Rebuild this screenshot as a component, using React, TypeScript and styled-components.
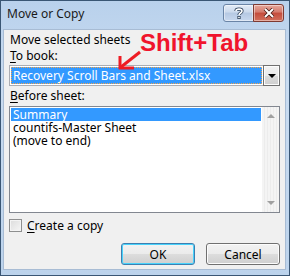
import React from 'react';
import styled, { createGlobalStyle } from 'styled-components';

const GlobalStyle = createGlobalStyle`
  html, body {
    margin: 0;
    padding: 0;
    background: #ffffff;
  }
  body {
    font-family: 'Noto Sans', 'Liberation Sans', sans-serif;
    font-size: 12px;
    color: #000;
  }
`;

const Window = styled.div`
  position: relative;
  width: 290px;
  height: 276px;
  box-sizing: border-box;
  border: 1px solid #3a5674;
  background: linear-gradient(180deg, #b9d1ec 0%, #c9dcf1 30%, #bcd3ec 100%);
  display: flex;
  flex-direction: column;
  overflow: hidden;
`;

const TitleBar = styled.div`
  height: 28px;
  display: flex;
  align-items: flex-start;
  padding-left: 6px;
  padding-right: 5px;
`;

const Title = styled.div`
  flex: 1;
  font-size: 12px;
  line-height: 14px;
  padding-top: 6px;
  color: #1a1a1a;
`;

const CaptionButtons = styled.div`
  display: flex;
  margin-top: 3px;
`;

const CaptionButton = styled.div<{ $close?: boolean }>`
  width: 31px;
  height: 18px;
  box-sizing: border-box;
  display: flex;
  align-items: center;
  justify-content: center;
  border: 1px solid ${(p) => (p.$close ? '#7e3a32' : '#6a84a6')};
  border-radius: ${(p) => (p.$close ? '0 3px 3px 0' : '3px 0 0 3px')};
  margin-left: ${(p) => (p.$close ? '-1px' : '0')};
  background: ${(p) =>
    p.$close
      ? 'linear-gradient(180deg, #e7a89b 0%, #d47a6d 45%, #c44c3c 50%, #d2705d 100%)'
      : 'linear-gradient(180deg, #e4ecf7 0%, #cbd9ec 45%, #b5c8e2 50%, #c8d8ee 100%)'};
  box-shadow: inset 0 0 0 1px rgba(255, 255, 255, 0.45);
`;

const Client = styled.div`
  margin: 0 3px 5px 2px;
  flex: 1;
  background: #f0f0f0;
  border: 1px solid #a8bcd4;
  display: flex;
  flex-direction: column;
  padding: 2px 5px 4px 5px;
`;

const Label = styled.div<{ $gap?: number }>`
  height: 15px;
  line-height: 15px;
  white-space: nowrap;
  margin-left: 1px;
  margin-top: ${(p) => p.$gap || 0}px;
`;

const Key = styled.span`
  text-decoration: underline;
  text-underline-offset: 2px;
`;

const Combo = styled.div`
  margin-top: 2px;
  height: 21px;
  box-sizing: border-box;
  border: 1px solid #abadb3;
  background: #fff;
  display: flex;
`;

const ComboValue = styled.div`
  flex: 1;
  margin: 1px;
  background: #3399ff;
  color: #fff;
  outline: 1px dotted #f6a44a;
  outline-offset: -1px;
  line-height: 17px;
  padding-left: 2px;
  white-space: nowrap;
  overflow: hidden;
`;

const ComboButton = styled.div`
  width: 17px;
  box-sizing: border-box;
  border: 1px solid #707070;
  margin: -1px -1px -1px 0;
  background: linear-gradient(180deg, #f2f2f2 0%, #ebebeb 50%, #dddddd 51%, #cfcfcf 100%);
  box-shadow: inset 0 0 0 1px #fcfcfc;
  display: flex;
  align-items: center;
  justify-content: center;
`;

const DownTri = styled.div<{ $color?: string }>`
  width: 0;
  height: 0;
  border-left: 4px solid transparent;
  border-right: 4px solid transparent;
  border-top: 4px solid ${(p) => p.$color || '#000'};
`;

const UpTri = styled.div<{ $color?: string }>`
  width: 0;
  height: 0;
  border-left: 4px solid transparent;
  border-right: 4px solid transparent;
  border-bottom: 4px solid ${(p) => p.$color || '#000'};
`;

const ListBox = styled.div`
  margin-top: 3px;
  height: 107px;
  box-sizing: border-box;
  border: 1px solid #828790;
  background: #fff;
  display: flex;
`;

const Items = styled.div`
  flex: 1;
  padding: 1px;
`;

const Item = styled.div<{ $selected?: boolean }>`
  height: 13px;
  line-height: 13px;
  padding-left: 2px;
  white-space: nowrap;
  background: ${(p) => (p.$selected ? '#3399ff' : 'transparent')};
  color: ${(p) => (p.$selected ? '#fff' : '#000')};
`;

const ScrollBar = styled.div`
  width: 17px;
  background: repeating-linear-gradient(90deg, #f4f4f4 0px, #f4f4f4 2px, #ececec 2px, #ececec 3px);
  display: flex;
  flex-direction: column;
  align-items: center;
  justify-content: space-between;
  padding: 7px 0 7px;
`;

const CheckRow = styled.label`
  margin-top: 6px;
  display: flex;
  align-items: center;
  height: 13px;
  gap: 5px;
`;

const Box = styled.div`
  width: 13px;
  height: 13px;
  box-sizing: border-box;
  border: 1px solid #8e8f8f;
  background: linear-gradient(135deg, #dcdcdc 0%, #f6f6f6 100%);
  box-shadow: inset 0 0 0 1px #f4f4f4;
`;

const ButtonRow = styled.div`
  margin-top: auto;
  display: flex;
  justify-content: flex-end;
  gap: 11px;
`;

const Button = styled.div<{ $default?: boolean }>`
  width: 74px;
  height: 22px;
  box-sizing: border-box;
  border: 1px solid ${(p) => (p.$default ? '#3c7fb1' : '#707070')};
  border-radius: 3px;
  background: linear-gradient(180deg, #f2f2f2 0%, #ebebeb 50%, #dddddd 51%, #cfcfcf 100%);
  box-shadow: inset 0 0 0 1px ${(p) => (p.$default ? '#48d2fb' : '#fcfcfc')};
  display: flex;
  align-items: center;
  justify-content: center;
`;

const Annotation = styled.div`
  position: absolute;
  left: 139px;
  top: 27px;
  font-family: 'Liberation Sans', 'Noto Sans', sans-serif;
  font-weight: bold;
  font-size: 24px;
  color: #f0142d;
  line-height: 30px;
  white-space: nowrap;
`;

const Arrow = styled.svg`
  position: absolute;
  left: 114px;
  top: 49px;
`;

export default function App() {
  return (
    <>
      <GlobalStyle />
      <Window>
        <TitleBar>
          <Title>Move or Copy</Title>
          <CaptionButtons>
            <CaptionButton>
              <svg width="10" height="12" viewBox="0 0 10 12">
                <path
                  d="M2 4 C2 1.5 8 1.5 8 4 C8 6 5 6 5 8"
                  fill="none"
                  stroke="#2c3f57"
                  strokeWidth="3.2"
                />
                <path
                  d="M2 4 C2 1.5 8 1.5 8 4 C8 6 5 6 5 8"
                  fill="none"
                  stroke="#fff"
                  strokeWidth="1.6"
                />
                <rect x="3.4" y="9" width="3.2" height="3" fill="#2c3f57" />
                <rect x="4.2" y="9.8" width="1.6" height="1.4" fill="#fff" />
              </svg>
            </CaptionButton>
            <CaptionButton $close>
              <svg width="12" height="10" viewBox="0 0 12 10">
                <path d="M2 1 L10 9 M10 1 L2 9" stroke="#4a1d18" strokeWidth="3.6" />
                <path d="M2 1 L10 9 M10 1 L2 9" stroke="#fff" strokeWidth="2" />
              </svg>
            </CaptionButton>
          </CaptionButtons>
        </TitleBar>
        <Client>
          <Label>Move selected sheets</Label>
          <Label $gap={1}>
            <Key>T</Key>o book:
          </Label>
          <Combo>
            <ComboValue>Recovery Scroll Bars and Sheet.xlsx</ComboValue>
            <ComboButton>
              <DownTri />
            </ComboButton>
          </Combo>
          <Label $gap={2}>
            <Key>B</Key>efore sheet:
          </Label>
          <ListBox>
            <Items>
              <Item $selected>Summary</Item>
              <Item>countifs-Master Sheet</Item>
              <Item>(move to end)</Item>
            </Items>
            <ScrollBar>
              <UpTri $color="#a0a0a0" />
              <DownTri $color="#a0a0a0" />
            </ScrollBar>
          </ListBox>
          <CheckRow>
            <Box />
            <span>
              <Key>C</Key>reate a copy
            </span>
          </CheckRow>
          <ButtonRow>
            <Button $default>OK</Button>
            <Button>Cancel</Button>
          </ButtonRow>
        </Client>
        <Annotation>Shift+Tab</Annotation>
        <Arrow width="30" height="24" viewBox="0 0 30 24">
          <path d="M25 2 L6 17" stroke="#ee1c24" strokeWidth="3" fill="none" />
          <path d="M5 6 L5 18 L19 18" stroke="#ee1c24" strokeWidth="3" fill="none" />
        </Arrow>
      </Window>
    </>
  );
}
